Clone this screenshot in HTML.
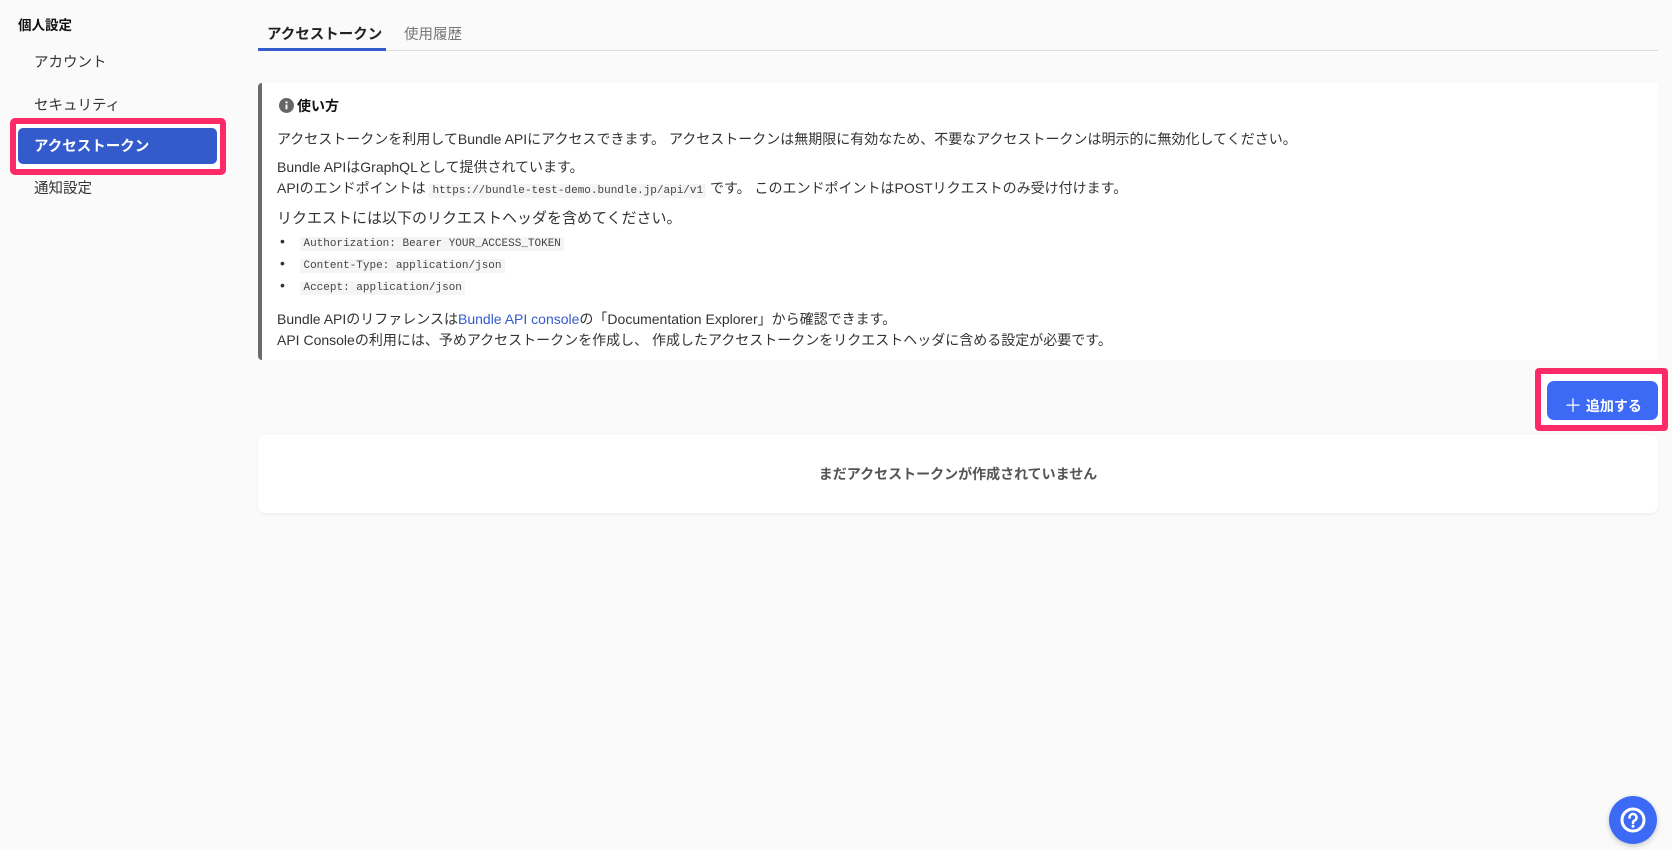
<!DOCTYPE html>
<html><head><meta charset="utf-8"><style>
*{margin:0;padding:0;box-sizing:border-box}
body{width:1672px;height:850px;background:#fafafa;font-family:"Liberation Sans","Noto Sans CJK JP",sans-serif;color:#333;position:relative;overflow:hidden;font-size:14px}
.a{position:absolute;white-space:nowrap}
code{font-family:"Liberation Mono","Noto Sans CJK JP",monospace;font-size:11px;background:#f5f5f5;padding:1px 3px;color:#444}
.side{font-size:14.5px;color:#333}
</style></head><body>
<div class="a" style="left:18px;top:14px;font-weight:bold;font-size:13.5px;color:#111">個人設定</div>
<div class="a side" style="left:34px;top:51px">アカウント</div>
<div class="a side" style="left:34px;top:94px">セキュリティ</div>
<div class="a" style="left:10px;top:118px;width:216px;height:57px;border:6px solid #fd2a68;border-radius:5px;background:#fff"></div>
<div class="a" style="left:18px;top:128px;width:199px;height:36px;background:#345bcb;border-radius:5px"></div>
<div class="a" style="left:34px;top:135px;color:#fff;font-weight:bold;font-size:14.5px">アクセストークン</div>
<div class="a side" style="left:34px;top:177px">通知設定</div>

<div class="a" style="left:258px;top:50px;width:1400px;height:1px;background:#ddd"></div>
<div class="a" style="left:258px;top:48px;width:128px;height:3px;background:#345bcb"></div>
<div class="a" style="left:267px;top:23px;font-weight:bold;font-size:14.5px;color:#222">アクセストークン</div>
<div class="a" style="left:404px;top:23px;font-size:14.5px;color:#777">使用履歴</div>

<div class="a" style="left:258px;top:83px;width:1400px;height:277px;background:#fff;border-left:4px solid #6b6b6b;border-radius:4px"></div>
<svg class="a" style="left:279px;top:98px" width="15" height="15" viewBox="0 0 16 16"><circle cx="8" cy="8" r="8" fill="#666"/><rect x="7" y="7" width="2" height="5" fill="#fff"/><circle cx="8" cy="4.6" r="1.2" fill="#fff"/></svg>
<div class="a" style="left:297px;top:96px;font-weight:bold;font-size:14px;color:#111">使い方</div>
<div class="a" style="left:277px;top:129px">アクセストークンを利用してBundle APIにアクセスできます。 アクセストークンは無期限に有効なため、不要なアクセストークンは明示的に無効化してください。</div>
<div class="a" style="left:277px;top:157px">Bundle APIはGraphQLとして提供されています。</div>
<div class="a" style="left:277px;top:178px">APIのエンドポイントは <code>https://bundle-test-demo.bundle.jp/api/v1</code> です。 このエンドポイントはPOSTリクエストのみ受け付けます。</div>
<div class="a" style="left:277px;top:207px;font-size:15px">リクエストには以下のリクエストヘッダを含めてください。</div>
<div class="a" style="left:280px;top:233px">•&nbsp;&nbsp;&nbsp;&nbsp;<code>Authorization: Bearer YOUR_ACCESS_TOKEN</code></div>
<div class="a" style="left:280px;top:255px">•&nbsp;&nbsp;&nbsp;&nbsp;<code>Content-Type: application/json</code></div>
<div class="a" style="left:280px;top:277px">•&nbsp;&nbsp;&nbsp;&nbsp;<code>Accept: application/json</code></div>
<div class="a" style="left:277px;top:309px">Bundle APIのリファレンスは<span style="color:#345bcb">Bundle API console</span>の「Documentation Explorer」から確認できます。</div>
<div class="a" style="left:277px;top:330px">API Consoleの利用には、予めアクセストークンを作成し、 作成したアクセストークンをリクエストヘッダに含める設定が必要です。</div>

<div class="a" style="left:1535px;top:368px;width:133px;height:63px;background:#fd2a68;border-radius:4px"></div>
<div class="a" style="left:1541px;top:374px;width:121px;height:51px;background:#fff"></div>
<div class="a" style="left:1547px;top:381px;width:111px;height:39px;background:#3d6af5;border-radius:7px"></div>
<div class="a" style="left:1564px;top:391px;color:#fff;font-weight:bold;font-size:14px"><span style="font-size:18px;font-weight:normal;position:relative;top:1px">＋</span> 追加する</div>

<div class="a" style="left:258px;top:435px;width:1400px;height:78px;background:#fff;border-radius:7px;box-shadow:0 1px 3px rgba(0,0,0,.06)"></div>
<div class="a" style="left:0;width:1916px;top:464px;text-align:center;font-weight:bold;color:#555;font-size:14px">まだアクセストークンが作成されていません</div>

<div class="a" style="left:1609px;top:796px;width:48px;height:48px;border-radius:50%;background:#3d6af5;box-shadow:0 2px 6px rgba(0,0,0,.2)"></div>
<svg class="a" style="left:1619px;top:806px" width="28" height="28" viewBox="0 0 28 28"><circle cx="14" cy="14" r="11" fill="none" stroke="#fff" stroke-width="3"/><path d="M10.5 11.5a3.5 3.5 0 1 1 4.8 3.2c-1 .5-1.3 1-1.3 2.2" fill="none" stroke="#fff" stroke-width="2.6" stroke-linecap="round"/><circle cx="14" cy="20.3" r="1.5" fill="#fff"/></svg>
</body></html>
